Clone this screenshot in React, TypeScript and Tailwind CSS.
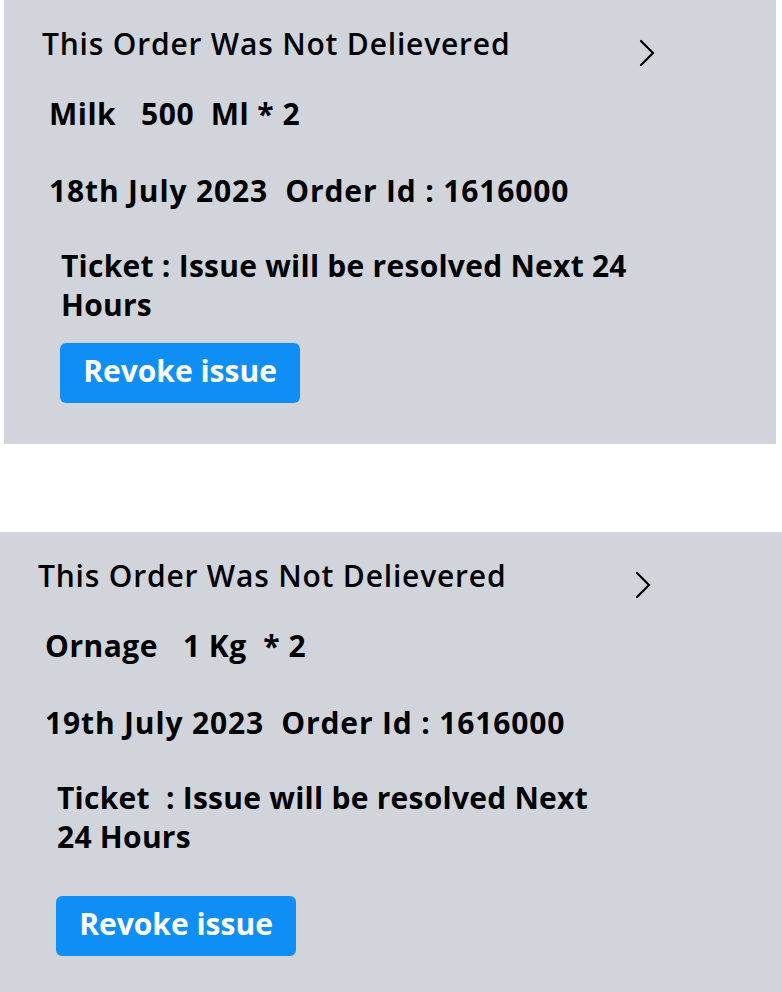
const font = "font-['Open_Sans','Noto_Sans',sans-serif]";

type Issue = {
  item: string;
  date: string;
  ticket: string;
  buttonGap: string;
  outer: string;
};

const ISSUES: Issue[] = [
  {
    item: "Milk   500  Ml * 2",
    date: "18th July 2023  Order Id : 1616000",
    ticket: "Ticket : Issue will be resolved Next 24\nHours",
    buttonGap: "mt-[19px]",
    outer: "ml-[4px] w-[772px] h-[444px]",
  },
  {
    item: "Ornage   1 Kg  * 2",
    date: "19th July 2023  Order Id : 1616000",
    ticket: "Ticket  : Issue will be resolved Next\n24 Hours",
    buttonGap: "mt-[40px]",
    outer: "mt-[88px] w-full h-[460px]",
  },
];

function Chevron() {
  return (
    <svg width="18" height="30" viewBox="0 0 18 30" className="text-black">
      <path
        d="M3 3 L15 15 L3 27"
        fill="none"
        stroke="currentColor"
        strokeWidth="2.2"
        strokeLinecap="round"
      />
    </svg>
  );
}

function IssueCard({ issue }: { issue: Issue }) {
  return (
    <div className={`${issue.outer} bg-[#d1d5db] pt-[20px] text-black ${font}`}>
      {/* header */}
      <div className="flex items-center">
        <h2 className="ml-[38px] w-[596px] text-[30px] leading-[40px] font-semibold tracking-[0.8px]">
          This Order Was Not Delievered
        </h2>
        <div className="mt-[18px]">
          <Chevron />
        </div>
      </div>

      <p className="mt-[28px] ml-[45px] text-[30px] leading-[36px] font-bold tracking-[0.5px] whitespace-pre">
        {issue.item}
      </p>

      <p className="mt-[41px] ml-[45px] text-[30px] leading-[36px] font-bold tracking-[0.85px] whitespace-pre">
        {issue.date}
      </p>

      <p className="mt-[37px] ml-[57px] text-[30px] leading-[39px] font-bold tracking-[0.25px] whitespace-pre">
        {issue.ticket}
      </p>

      <button
        className={`${issue.buttonGap} ml-[56px] flex h-[60px] w-[240px] items-center justify-center rounded-[6px] bg-[#0f8ff5] pb-[5px] text-[30px] font-bold text-white`}
      >
        Revoke issue
      </button>
    </div>
  );
}

export default function App() {
  return (
    <div className="h-[992px] w-[782px] overflow-hidden bg-white">
      {ISSUES.map((issue) => (
        <IssueCard key={issue.date} issue={issue} />
      ))}
    </div>
  );
}
